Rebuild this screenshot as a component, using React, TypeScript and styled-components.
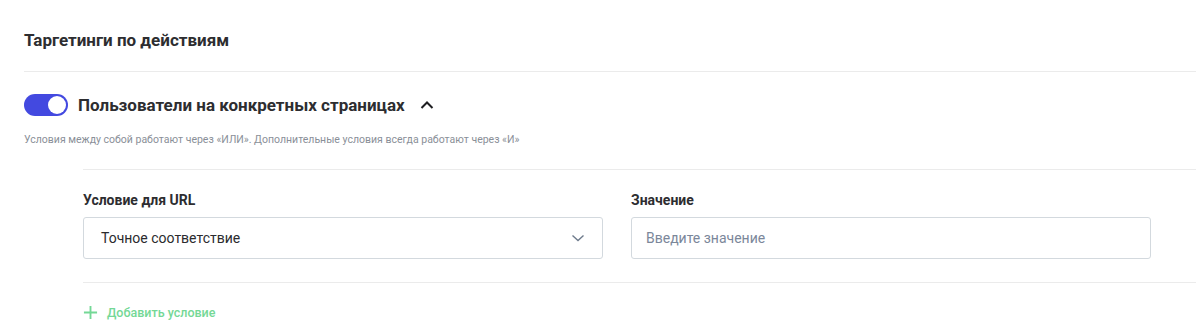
import React, { useState } from "react";
import styled, { createGlobalStyle } from "styled-components";

const GlobalStyle = createGlobalStyle`
  * { box-sizing: border-box; }
  body {
    margin: 0;
    background: #ffffff;
    font-family: Roboto, "Noto Sans", "Liberation Sans", sans-serif;
    color: #2b2b2e;
  }
`;

const Page = styled.div`
  padding: 0 0 0 24px;
`;

const SectionTitle = styled.h2`
  margin: 0;
  height: 72px;
  display: flex;
  align-items: center;
  padding-top: 8px;
  font-size: 17px;
  font-weight: 700;
  color: #2d2d30;
  border-bottom: 1px solid #ebebeb;
`;

const GroupHeader = styled.div`
  display: flex;
  align-items: center;
  gap: 10px;
  margin-top: 22px;
  height: 22px;
`;

const Switch = styled.button<{ $on: boolean }>`
  position: relative;
  width: 44px;
  height: 22px;
  padding: 0;
  border: none;
  border-radius: 11px;
  background: ${({ $on }) => ($on ? "#4349e0" : "#c9ced6")};
  cursor: pointer;

  &::after {
    content: "";
    position: absolute;
    top: 2px;
    left: ${({ $on }) => ($on ? "24px" : "2px")};
    width: 18px;
    height: 18px;
    border-radius: 50%;
    background: #ffffff;
  }
`;

const GroupTitle = styled.span`
  font-size: 17px;
  font-weight: 700;
  color: #2d2d30;
`;

const Chevron = styled.span`
  display: flex;
  margin-left: 4px;
  color: #1f1f22;
`;

const Hint = styled.p`
  margin: 17px 0 0;
  font-size: 10.5px;
  line-height: 14px;
  color: #8a8f98;
`;

const Conditions = styled.div`
  margin: 22px 0 0 59px;
  border-top: 1px solid #ebebeb;
`;

const FieldsRow = styled.div`
  display: grid;
  grid-template-columns: 520px 520px;
  gap: 28px;
  padding: 21px 0 23px;
  border-bottom: 1px solid #ebebeb;
`;

const Field = styled.div`
  display: flex;
  flex-direction: column;
  gap: 8px;
`;

const Label = styled.label`
  font-size: 14px;
  font-weight: 700;
  line-height: 18px;
  color: #2d2d30;
`;

const Box = styled.div`
  height: 42px;
  border: 1px solid #d3d9de;
  border-radius: 3px;
  display: flex;
  align-items: center;
  justify-content: space-between;
  padding: 0 16px 0 17px;
  font-size: 14px;
  color: #2b2b2e;
`;

const TextInput = styled.input`
  height: 42px;
  border: 1px solid #d3d9de;
  border-radius: 3px;
  padding: 0 14px;
  font-family: inherit;
  font-size: 14px;
  color: #2b2b2e;
  outline: none;

  &::placeholder {
    color: #7b879a;
  }
`;

const AddButton = styled.button`
  display: flex;
  align-items: center;
  gap: 9px;
  margin-top: 22px;
  padding: 0;
  border: none;
  background: none;
  font-family: inherit;
  font-size: 12.5px;
  font-weight: 500;
  color: #74d896;
  cursor: pointer;
`;

export default function App() {
  const [on, setOn] = useState(true);

  return (
    <Page>
      <GlobalStyle />
      <SectionTitle>Таргетинги по действиям</SectionTitle>

      <GroupHeader>
        <Switch $on={on} onClick={() => setOn(!on)} aria-label="toggle" />
        <GroupTitle>Пользователи на конкретных страницах</GroupTitle>
        <Chevron>
          <svg width="16" height="16" viewBox="0 0 16 16" fill="none">
            <path d="M2.5 11 8 5.5l5.5 5.5" stroke="currentColor" strokeWidth="2" />
          </svg>
        </Chevron>
      </GroupHeader>

      <Hint>
        Условия между собой работают через «ИЛИ». Дополнительные условия всегда работают через «И»
      </Hint>

      <Conditions>
        <FieldsRow>
          <Field>
            <Label>Условие для URL</Label>
            <Box>
              <span>Точное соответствие</span>
              <svg width="16" height="16" viewBox="0 0 16 16" fill="none">
                <path d="M2.5 5.5 8 10.5l5.5-5" stroke="#6e7b8c" strokeWidth="1.4" />
              </svg>
            </Box>
          </Field>
          <Field>
            <Label>Значение</Label>
            <TextInput placeholder="Введите значение" />
          </Field>
        </FieldsRow>

        <AddButton>
          <svg width="15" height="15" viewBox="0 0 16 16" fill="none">
            <path d="M8 1v14M1 8h14" stroke="#74d896" strokeWidth="2" />
          </svg>
          Добавить условие
        </AddButton>
      </Conditions>
    </Page>
  );
}
